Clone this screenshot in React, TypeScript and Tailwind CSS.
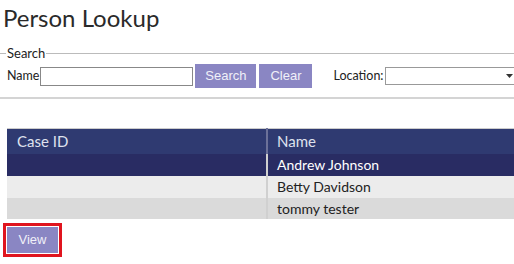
export default function App() {
    const rows = [
        { id: "", name: "Andrew Johnson", selected: true },
        { id: "", name: "Betty Davidson" },
        { id: "", name: "tommy tester" },
    ];

    return (
        <div className="h-[264px] w-[514px] overflow-hidden bg-white font-['Lato',sans-serif] text-[#222]">
            <h1 className="pl-[3px] pt-[3px] text-[24px] leading-[30px] text-[#2a2a2a]">Person Lookup</h1>

            <fieldset className="mt-[13px] w-[540px] border-t border-[#bbb] pb-[9px]">
                <legend className="ml-[6px] px-[1px] text-[13px] leading-[14px]">Search</legend>
                <div className="mt-[4px] flex items-center pl-[7px]">
                    <label className="text-[12.5px]">Name</label>
                    <input className="ml-[1px] h-[19px] w-[153px] border border-[#888] bg-white" />
                    <button className="ml-[2px] h-[24px] w-[61px] bg-[#8a86c3] font-['Liberation_Sans',sans-serif] text-[13px] text-[#f0f0f8]">
                        Search
                    </button>
                    <button className="ml-[3px] h-[24px] w-[53px] bg-[#8a86c3] font-['Liberation_Sans',sans-serif] text-[13px] text-[#f0f0f8]">
                        Clear
                    </button>
                    <label className="ml-[21px] text-[12.5px]">Location:</label>
                    <div className="ml-[1px] flex h-[18px] w-[135px] items-center justify-end border border-[#999] bg-white pr-[6px]">
                        <svg width="7" height="4" viewBox="0 0 7 4">
                            <path d="M0 0h7L3.5 4z" fill="#333" />
                        </svg>
                    </div>
                </div>
            </fieldset>
            <div className="h-[2px] w-full bg-[#d4d4d4]" />

            <table className="ml-[7px] mt-[29px] w-[520px] border-collapse border-t border-[#ccc] text-[14px]">
                <thead>
                    <tr className="h-[25px] bg-[#2f3a71] text-[15px] text-[#dfe2ee]">
                        <th className="w-[260px] border-r-2 border-[#6c7199] pl-[10px] text-left font-normal">Case ID</th>
                        <th className="pl-[9px] text-left font-normal">Name</th>
                    </tr>
                </thead>
                <tbody>
                    {rows.map((r) => (
                        <tr
                            key={r.name}
                            className={
                                r.selected
                                    ? "h-[22px] bg-[#292c63] text-white"
                                    : r.name === "Betty Davidson"
                                      ? "h-[22px] bg-[#ececec]"
                                      : "h-[21px] bg-[#dadada]"
                            }
                        >
                            <td className="border-r-2 border-[#d0d0d0] pl-[10px]">{r.id}</td>
                            <td className="pl-[9px]">{r.name}</td>
                        </tr>
                    ))}
                </tbody>
            </table>

            <div className="ml-[3px] mt-[4px] w-fit border-[3px] border-[#e0141e] p-[1px]">
                <button className="block h-[26px] w-[51px] bg-[#8a86c3] font-['Liberation_Sans',sans-serif] text-[13px] text-[#f0f0f8]">
                    View
                </button>
            </div>
        </div>
    );
}
